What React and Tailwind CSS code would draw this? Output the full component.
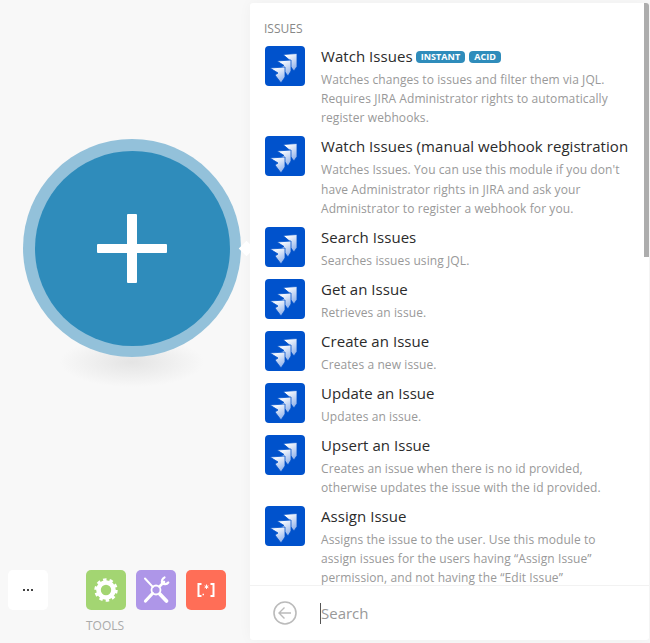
import React from 'react';

const MODULES = [
    { title: 'Watch Issues', badges: ['INSTANT', 'ACID'], lines: ['Watches changes to issues and filter them via JQL.', 'Requires JIRA Administrator rights to automatically', 'register webhooks.'] },
    { title: 'Watch Issues (manual webhook registration', lines: ["Watches Issues. You can use this module if you don't", 'have Administrator rights in JIRA and ask your', 'Administrator to register a webhook for you.'] },
    { title: 'Search Issues', lines: ['Searches issues using JQL.'] },
    { title: 'Get an Issue', lines: ['Retrieves an issue.'] },
    { title: 'Create an Issue', lines: ['Creates a new issue.'] },
    { title: 'Update an Issue', lines: ['Updates an issue.'] },
    { title: 'Upsert an Issue', lines: ['Creates an issue when there is no id provided,', 'otherwise updates the issue with the id provided.'] },
    { title: 'Assign Issue', lines: ['Assigns the issue to the user. Use this module to', 'assign issues for the users having “Assign Issue”', 'permission, and not having the “Edit Issue”'] },
];

const JiraLogo = () => (
    <div className="w-10 h-10 shrink-0 rounded-[4px] bg-[#0052cc]">
        <svg width="40" height="40" viewBox="0 0 40 40">
            <defs>
                <linearGradient id="jira-fade" x1="0.2" y1="0" x2="0.7" y2="1">
                    <stop offset="0.1" stopColor="#ffffff" />
                    <stop offset="1" stopColor="#8fb1ea" />
                </linearGradient>
            </defs>
            <g stroke="#0052cc" strokeWidth="0.8">
                <path d="M18 8.5l14-1v13l-3 4.5-7-9 3-1.5z" fill="url(#jira-fade)" />
                <path d="M12 15l14-1v11l-3 5-7-9 3-1.5z" fill="url(#jira-fade)" />
                <path d="M5 22l15-1v10l-4 6-6-8 3-2z" fill="url(#jira-fade)" />
            </g>
        </svg>
    </div>
);

const ModuleRow = ({ title, badges, lines }) => (
    <div className="flex gap-4 pb-[8.8px]">
        <JiraLogo />
        <div className="min-w-0 flex-1">
            <div className="flex items-center h-[21px] text-[15px] leading-[21px] tracking-[0.05px] text-[#2b2b2b] whitespace-nowrap">
                {title}
                {badges && (
                    <span className="flex gap-1 ml-[3px]">
                        {badges.map(b => (
                            <span key={b} className="h-[12px] px-[5px] rounded-[4px] bg-[#2f8cbb] text-white text-[9px] leading-[12px] font-bold">{b}</span>
                        ))}
                    </span>
                )}
            </div>
            <div className="mt-[3px] text-[12px] leading-[19.2px] tracking-[0.09px] text-[#999]">
                {lines.map(l => <div key={l} className="whitespace-nowrap">{l}</div>)}
            </div>
        </div>
    </div>
);

const ToolButton = ({ className, children }) => (
    <div className={`w-10 h-10 rounded-[5px] flex items-center justify-center ${className}`}>{children}</div>
);

export default function App() {
    return (
        <div className="w-[650px] h-[643px] flex overflow-hidden bg-[#f8f8f8] font-['Open_Sans','Noto_Sans',sans-serif]">
            <div className="w-[250px] shrink-0 h-full flex flex-col">
                <div className="relative ml-[23px] mt-[139px] w-[218px] h-[218px]">
                    <div className="absolute left-[37px] top-[198px] w-[144px] h-[50px] rounded-full bg-[radial-gradient(closest-side,#e4e4e4,#f8f8f8)]" />
                    <div className="relative w-full h-full rounded-full bg-[#93c1da] flex items-center justify-center">
                        <div className="relative w-[195px] h-[195px] rounded-full bg-[#2f8cbb] flex items-center justify-center">
                            <div className="absolute w-[70px] h-[9px] rounded-[1px] bg-white" />
                            <div className="absolute w-[10px] h-[69px] rounded-[1px] bg-white" />
                        </div>
                    </div>
                    <div className="absolute left-[218px] top-[104px] w-[11px] h-[11px] rotate-45 bg-white" />
                </div>
                <div className="mt-[213px] pl-2 flex items-start">
                    <div className="w-10 h-10 rounded-[5px] bg-white flex items-center justify-center gap-[2px]">
                        <span className="w-[2px] h-[2px] bg-[#444]" />
                        <span className="w-[2px] h-[2px] bg-[#444]" />
                        <span className="w-[2px] h-[2px] bg-[#444]" />
                    </div>
                    <div className="ml-[38px]">
                        <div className="flex gap-[10px]">
                            <ToolButton className="bg-[#a3d572]">
                                <svg width="24" height="24" viewBox="0 0 24 24" fill="none">
                                    <circle cx="12" cy="12" r="7.5" stroke="#fff" strokeWidth="4.6" />
                                    <circle cx="12" cy="12" r="10.2" stroke="#fff" strokeWidth="3" strokeDasharray="3.4 3.01" />
                                </svg>
                            </ToolButton>
                            <ToolButton className="bg-[#ae96e8]">
                                <svg width="30" height="30" viewBox="0 0 30 30" fill="none" stroke="#fff" strokeLinecap="round">
                                    <circle cx="15" cy="15" r="4.5" strokeWidth="1.8" />
                                    <path d="M4 3.5l7.8 8.4" strokeWidth="2" />
                                    <path d="M18.5 11.5L23 7" strokeWidth="2.6" />
                                    <path d="M23.5 2.5a4.2 4.2 0 0 0-2.2 5.6 4.2 4.2 0 0 0 6-.6" strokeWidth="2.2" />
                                    <path d="M18.8 19l6.7 7" strokeWidth="3.8" />
                                    <path d="M11.5 18.5L4.5 26" strokeWidth="3.2" />
                                </svg>
                            </ToolButton>
                            <ToolButton className="bg-[#ff6e57]">
                                <svg width="18" height="14" viewBox="0 0 18 14" fill="none" stroke="#fff">
                                    <path d="M4.5 1H1.5v12h3M13.5 1h3v12h-3" strokeWidth="2" />
                                    <path d="M9.5 1.5v4.5M7.6 2.8l3.8 2M11.4 2.8l-3.8 2" strokeWidth="1" />
                                    <path d="M5.5 11.5h1.5" strokeWidth="1.6" />
                                </svg>
                            </ToolButton>
                        </div>
                        <div className="mt-[9px] text-[12px] leading-[14px] text-[#aaa]">TOOLS</div>
                    </div>
                </div>
            </div>

            <div className="mt-[3px] w-[399px] h-[637px] flex flex-col bg-white rounded-[3px] overflow-hidden shadow-[0_0_14px_rgba(0,0,0,0.04)]">
                <div className="flex-1 min-h-0 flex overflow-hidden">
                    <div className="flex-1 min-w-0 pl-[15px] pt-[18px]">
                        <div className="-ml-px text-[12px] leading-[16px] text-[#888] mb-[9px]">ISSUES</div>
                        {MODULES.map(m => <ModuleRow key={m.title} {...m} />)}
                    </div>
                    <div className="w-[5px] h-[254px] shrink-0 bg-[#adadad]" />
                </div>
                <div className="h-[55px] shrink-0 border-t border-[#f2f2f2] flex items-center pl-[23px]">
                    <svg width="24" height="24" viewBox="0 0 24 24" fill="none" stroke="#bbb">
                        <circle cx="12" cy="12" r="11" strokeWidth="1.6" />
                        <path d="M18 12H6.5M11.5 6.5L6 12l5.5 5.5" strokeWidth="1.4" />
                    </svg>
                    <div className="ml-[23px] w-px h-[21px] bg-[#555]" />
                    <span className="text-[15px] text-[#999]">Search</span>
                </div>
            </div>
        </div>
    );
}
